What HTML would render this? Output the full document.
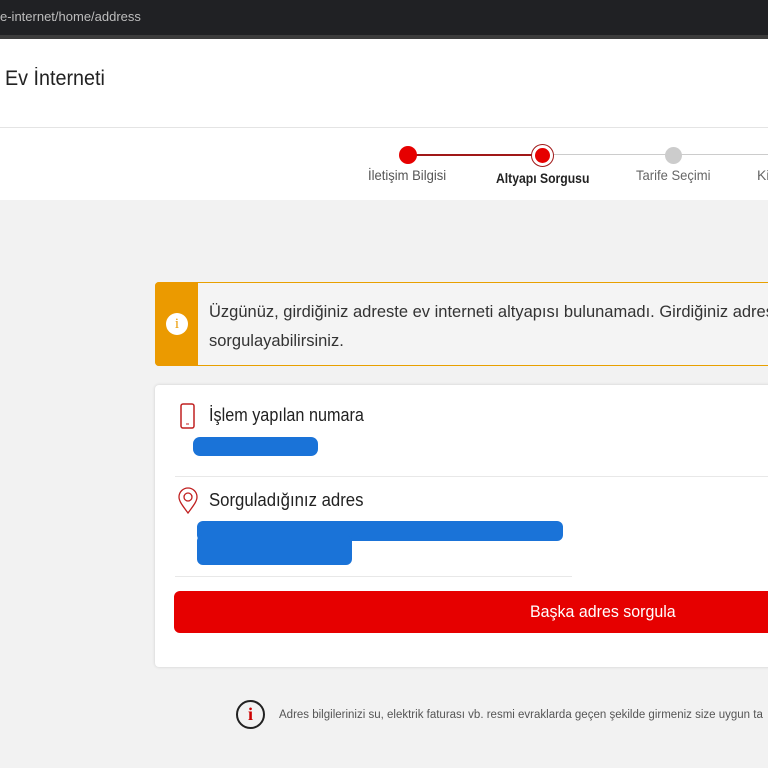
<!DOCTYPE html>
<html><head><meta charset="utf-8"><style>
*{margin:0;padding:0;box-sizing:border-box}
body{width:768px;height:768px;overflow:hidden;background:#f2f2f2;font-family:"Liberation Sans",sans-serif;position:relative;color:#333}
.a{position:absolute}
.n{transform:scaleX(.9);transform-origin:0 0;white-space:nowrap}
</style></head><body>
<div class="a" style="left:0;top:0;width:768px;height:35px;background:#202124"></div>
<div class="a" style="left:0;top:35px;width:768px;height:4px;background:#3c3c3c"></div>
<div class="a" style="left:0;top:9px;font-size:13px;color:#bdbdbd">e-internet/home/address</div>
<div class="a" style="left:0;top:39px;width:768px;height:161px;background:#fff"></div>
<div class="a" style="left:0;top:127px;width:768px;height:1px;background:#e4e4e4"></div>
<div class="a n" style="left:5px;top:67px;font-size:21px;color:#222;transform:scaleX(.94)">Ev İnterneti</div>
<div class="a" style="left:408px;top:154px;width:134px;height:2px;background:#a01818"></div>
<div class="a" style="left:542px;top:154px;width:226px;height:1px;background:#ccc"></div>
<div class="a" style="left:399px;top:146px;width:18px;height:18px;border-radius:50%;background:#e60000"></div>
<div class="a" style="left:531px;top:144px;width:23px;height:23px;border-radius:50%;border:1.5px solid #a01818;background:#fff"></div>
<div class="a" style="left:535px;top:148px;width:15px;height:15px;border-radius:50%;background:#e60000"></div>
<div class="a" style="left:665px;top:147px;width:17px;height:17px;border-radius:50%;background:#ccc"></div>
<div class="a n" style="left:368px;top:167px;font-size:14px;color:#555;transform:scaleX(.93)">İletişim Bilgisi</div>
<div class="a n" style="left:496px;top:170px;font-size:14px;color:#222;font-weight:bold;transform:scaleX(.87)">Altyapı Sorgusu</div>
<div class="a n" style="left:636px;top:167px;font-size:14px;color:#666;transform:scaleX(.93)">Tarife Seçimi</div>
<div class="a" style="left:757px;top:167px;font-size:14px;color:#666">Ki</div>
<div class="a" style="left:155px;top:282px;width:620px;height:84px;background:#f4f4f4;border:1px solid #e8a000;border-radius:4px"></div>
<div class="a" style="left:155px;top:282px;width:43px;height:84px;background:#eb9a00;border-radius:4px 0 0 4px"></div>
<div class="a" style="left:166px;top:313px;width:22px;height:22px;border-radius:50%;background:#fff;color:#eb9a00;font-size:15px;text-align:center;line-height:22px;font-family:'Liberation Serif',serif">i</div>
<div class="a n" style="left:209px;top:298px;font-size:16.5px;color:#333;line-height:29px;transform:none">Üzgünüz, girdiğiniz adreste ev interneti altyapısı bulunamadı. Girdiğiniz adres<br>sorgulayabilirsiniz.</div>
<div class="a" style="left:155px;top:385px;width:620px;height:282px;background:#fff;border-radius:4px;box-shadow:0 0 3px rgba(0,0,0,.15)"></div>
<svg class="a" style="left:178px;top:402px" width="20" height="28"><rect x="3" y="2" width="13" height="24" rx="2" fill="none" stroke="#c02020" stroke-width="1.5"/><line x1="8" y1="22" x2="11" y2="22" stroke="#c02020"/></svg>
<div class="a n" style="left:209px;top:405px;font-size:18px;color:#222;transform:scaleX(.9)">İşlem yapılan numara</div>
<div class="a" style="left:193px;top:437px;width:125px;height:19px;background:#1a73d8;border-radius:7px"></div>
<div class="a" style="left:175px;top:476px;width:593px;height:1px;background:#e8e8e8"></div>
<svg class="a" style="left:176px;top:487px" width="24" height="28"><path d="M12 26C6 18 3 14 3 10a9 9 0 0 1 18 0c0 4-3 8-9 16z" fill="none" stroke="#c02020" stroke-width="1.3"/><circle cx="12" cy="10" r="4" fill="none" stroke="#c02020" stroke-width="1.3"/></svg>
<div class="a n" style="left:209px;top:490px;font-size:18px;color:#222;transform:scaleX(.93)">Sorguladığınız adres</div>
<div class="a" style="left:197px;top:521px;width:366px;height:20px;background:#1a73d8;border-radius:6px"></div>
<div class="a" style="left:197px;top:535px;width:155px;height:30px;background:#1a73d8;border-radius:6px"></div>
<div class="a" style="left:175px;top:576px;width:397px;height:1px;background:#e8e8e8"></div>
<div class="a" style="left:174px;top:591px;width:600px;height:42px;background:#e60000;border-radius:6px"></div>
<div class="a n" style="left:530px;top:602px;font-size:17px;color:#fff;transform:scaleX(.94)">Başka adres sorgula</div>
<div class="a" style="left:236px;top:700px;width:29px;height:29px;border-radius:50%;border:2px solid #222;color:#c00;font-family:'Liberation Serif',serif;font-weight:bold;font-size:18px;text-align:center;line-height:25px">i</div>
<div class="a" style="left:279px;top:709px;font-size:11.5px;color:#555;white-space:nowrap">Adres bilgilerinizi su, elektrik faturası vb. resmi evraklarda geçen şekilde girmeniz size uygun ta</div>
</body></html>
